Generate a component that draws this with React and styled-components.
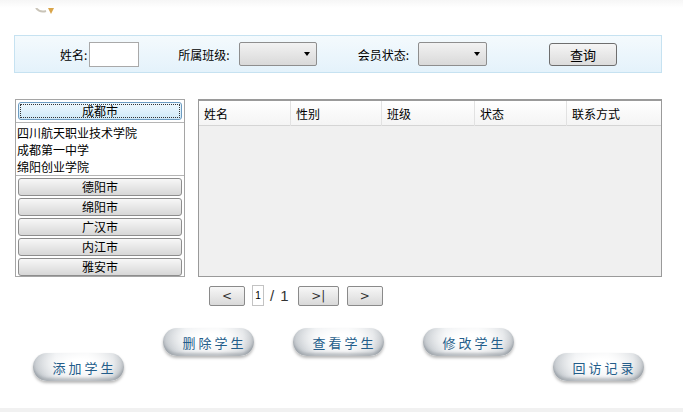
import React, { useState } from 'react';
import styled, { createGlobalStyle } from 'styled-components';

const GlobalStyle = createGlobalStyle`
  html, body {
    margin: 0;
    padding: 0;
    background: #fff;
  }
  body {
    font-family: "Noto Sans CJK SC", "Liberation Sans", sans-serif;
    font-size: 12px;
    color: #000;
  }
`;

const Page = styled.div`
  width: 683px;
  height: 412px;
  overflow: hidden;
  display: flex;
  flex-direction: column;
  position: relative;
`;

const Header = styled.div`
  height: 35px;
  padding-left: 34px;
  background: linear-gradient(#f6f6f6, #fff 8px);
`;

const SearchBar = styled.form`
  width: 646px;
  height: 36px;
  margin-left: 14px;
  border: 1px solid #c6e2f1;
  background: linear-gradient(#f4fafd, #e4f2fb);
  display: flex;
  align-items: center;
`;

const Label = styled.label`
  margin-left: ${(p) => p.$offset}px;
  margin-right: ${(p) => p.$gap}px;
  color: #000;
  font-size: 12px;
  white-space: nowrap;
`;

const TextBox = styled.input`
  width: 50px;
  height: 25px;
  box-sizing: border-box;
  border: 1px solid #a9a9a9;
  background: #fff;
  padding: 0 3px;
  font: inherit;
`;

const Select = styled.div`
  width: ${(p) => p.$w}px;
  height: 24px;
  box-sizing: border-box;
  border: 1px solid #8e8e8e;
  border-radius: 2px;
  background: linear-gradient(#f2f2f2, #d9d9d9);
  display: flex;
  align-items: center;
  justify-content: flex-end;
  padding-right: 6px;

  &::after {
    content: '';
    border-left: 3px solid transparent;
    border-right: 3px solid transparent;
    border-top: 4px solid #000;
  }
`;

const QueryButton = styled.button`
  margin-left: 62px;
  width: 68px;
  height: 23px;
  border: 1px solid #6e6e6e;
  border-radius: 3px;
  background: linear-gradient(#f5f5f5, #dcdcdc);
  font: inherit;
  font-size: 13px;
  padding: 0;
  cursor: pointer;
`;

const Main = styled.div`
  display: flex;
  gap: 13px;
  margin-top: 26px;
  padding-left: 15px;
`;

const CityPanel = styled.div`
  width: 170px;
  height: 178px;
  box-sizing: border-box;
  border: 1px solid #a5a5a5;
  padding: 2px;
  display: flex;
  flex-direction: column;
  gap: 2px;
`;

const CityButton = styled.button`
  height: 18px;
  flex: none;
  box-sizing: border-box;
  border: 1px solid ${(p) => (p.$active ? '#6d9cc2' : '#8d8d8d')};
  border-radius: 3px;
  background: ${(p) =>
    p.$active ? 'linear-gradient(#eef8fe, #cfe9f8)' : 'linear-gradient(#f7f7f7, #d7d7d7)'};
  font: inherit;
  font-size: 12px;
  line-height: 14px;
  padding: 0;
  outline: ${(p) => (p.$active ? '1px dotted #333' : 'none')};
  outline-offset: -3px;
  cursor: pointer;
`;

const SchoolList = styled.ul`
  list-style: none;
  margin: 0 -2px;
  padding: 1px 0 0 1px;
  border-top: 1px solid #b5b5b5;
  border-bottom: 1px solid #b5b5b5;
  height: 51px;
  display: flex;
  flex-direction: column;
`;

const School = styled.li`
  height: 17px;
  line-height: 17px;
  font-size: 12px;
  white-space: nowrap;
`;

const Grid = styled.div`
  width: 464px;
  height: 178px;
  box-sizing: border-box;
  border: 1px solid #9a9a9a;
  border-top-width: 2px;
  background: #f0f0f0;
`;

const GridHead = styled.div`
  display: grid;
  grid-template-columns: 92px 91px 93px 92px 1fr;
  height: 24px;
  background: linear-gradient(#fff, #f4f4f4);
  border-bottom: 1px solid #d5d5d5;
`;

const HeadCell = styled.div`
  padding-left: 5px;
  line-height: 25px;
  font-size: 12px;
  border-right: 1px solid #e2e2e2;

  &:last-child {
    border-right: none;
  }
`;

const Pager = styled.div`
  display: flex;
  align-items: center;
  margin: 8px 0 0 209px;
  height: 21px;
`;

const PageButton = styled.button`
  width: ${(p) => p.$w}px;
  height: 20px;
  box-sizing: border-box;
  border: 1px solid #8a8a8a;
  border-radius: 2px;
  background: linear-gradient(#f7f7f7, #d9d9d9);
  font-family: "DejaVu Sans", sans-serif;
  font-size: 12px;
  color: #333;
  padding: 0;
  margin-left: ${(p) => p.$ml}px;
  cursor: pointer;
`;

const PageInput = styled.input`
  width: 12px;
  height: 21px;
  box-sizing: border-box;
  border: 1px solid #c3c3c3;
  margin-left: 7px;
  padding: 0;
  text-align: center;
  font-family: "Liberation Sans", sans-serif;
  font-size: 10px;
`;

const PageTotal = styled.span`
  margin-left: 6px;
  font-family: "Liberation Sans", sans-serif;
  font-size: 15px;
  color: #333;
  letter-spacing: 1px;
`;

const Actions = styled.div`
  display: flex;
  gap: 39px;
  height: 53px;
  margin-top: 22px;
  padding-left: 33px;
`;

const PillButton = styled.button`
  align-self: ${(p) => (p.$low ? 'flex-end' : 'flex-start')};
  width: 91px;
  height: 28px;
  border: none;
  border-radius: 14px;
  background:
    radial-gradient(ellipse 60% 70% at 52% 35%, #ffffff 20%, rgba(255, 255, 255, 0) 100%),
    linear-gradient(90deg, #b4bac0 0%, #e6e9ec 25%, #f2f3f4 60%, #d3d7db 88%, #a9afb5 100%);
  box-shadow: 0 2px 3px rgba(0, 0, 0, 0.28), inset 0 -3px 3px rgba(110, 118, 126, 0.4);
  color: #245d8a;
  font-family: "Noto Sans CJK SC", serif;
  font-size: 13px;
  letter-spacing: 3px;
  padding: 0 0 0 12px;
  cursor: pointer;
`;

const Footer = styled.div`
  margin-top: auto;
  height: 4px;
  background: #f1f1f1;
`;

const Logo = () => (
  <svg width="24" height="6" viewBox="0 0 24 6">
    <path d="M2 0 Q6 5 12 3" stroke="#c9c4b8" strokeWidth="2" fill="none" />
    <path d="M14 0 L17 6 L20 0 Z" fill="#d9a54a" />
  </svg>
);

const cities = ['德阳市', '绵阳市', '广汉市', '内江市', '雅安市'];
const schools = ['四川航天职业技术学院', '成都第一中学', '绵阳创业学院'];
const columns = ['姓名', '性别', '班级', '状态', '联系方式'];

const App = () => {
  const [name, setName] = useState('');

  return (
    <Page>
      <GlobalStyle />
      <Header>
        <Logo />
      </Header>
      <SearchBar onSubmit={(e) => e.preventDefault()}>
        <Label $offset={45} $gap={2}>姓名:</Label>
        <TextBox value={name} onChange={(e) => setName(e.target.value)} />
        <Label $offset={39} $gap={9}>所属班级:</Label>
        <Select $w={78} />
        <Label $offset={41} $gap={9}>会员状态:</Label>
        <Select $w={69} />
        <QueryButton type="submit">查询</QueryButton>
      </SearchBar>

      <Main>
        <CityPanel>
          <CityButton $active>成都市</CityButton>
          <SchoolList>
            {schools.map((s) => (
              <School key={s}>{s}</School>
            ))}
          </SchoolList>
          {cities.map((c) => (
            <CityButton key={c}>{c}</CityButton>
          ))}
        </CityPanel>

        <Grid>
          <GridHead>
            {columns.map((c) => (
              <HeadCell key={c}>{c}</HeadCell>
            ))}
          </GridHead>
        </Grid>
      </Main>

      <Pager>
        <PageButton $w={36} $ml={0}>&lt;</PageButton>
        <PageInput defaultValue="1" />
        <PageTotal>/ 1</PageTotal>
        <PageButton $w={41} $ml={8}>&gt;|</PageButton>
        <PageButton $w={36} $ml={8}>&gt;</PageButton>
      </Pager>

      <Actions>
        <PillButton $low>添加学生</PillButton>
        <PillButton>删除学生</PillButton>
        <PillButton>查看学生</PillButton>
        <PillButton>修改学生</PillButton>
        <PillButton $low>回访记录</PillButton>
      </Actions>

      <Footer />
    </Page>
  );
};

export default App;
